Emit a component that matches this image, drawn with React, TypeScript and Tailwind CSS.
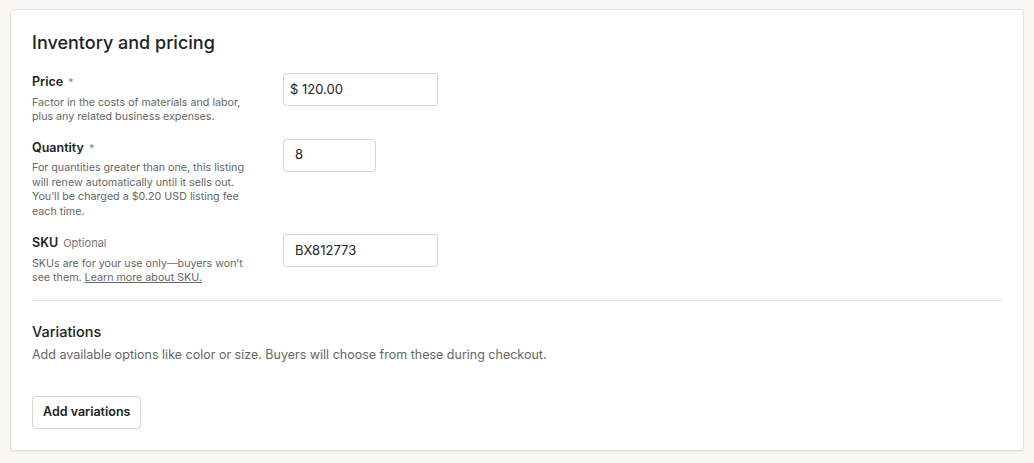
import React from 'react'

const font = { fontFamily: 'Inter, "Liberation Sans", Arial, sans-serif' }

function Field({
  label,
  required,
  optional,
  children,
  input,
}: {
  label: string
  required?: boolean
  optional?: boolean
  children: React.ReactNode
  input: React.ReactNode
}) {
  return (
    <div className="flex items-start">
      <div className="w-[251px] shrink-0">
        <div className="flex items-baseline gap-[5px]">
          <span className="text-[12.5px] font-semibold leading-[16px] text-[#222]">{label}</span>
          {required && <span className="text-[11px] text-[#888]">*</span>}
          {optional && <span className="text-[11px] text-[#777]">Optional</span>}
        </div>
        <p className="mt-[5px] text-[10.7px] leading-[14.5px] text-[#666]">{children}</p>
      </div>
      {input}
    </div>
  )
}

export default function App() {
  return (
    <div className="min-h-[463px] bg-[#f8f7f3] px-[10px] pt-[9px] pb-[12px]" style={font}>
      <section className="rounded-[3px] border border-[#e2e1dc] bg-white px-[21px] pt-[22px] pb-[21px] shadow-[0_1px_1px_rgba(0,0,0,0.06)]">
        <h2 className="text-[18px] font-medium leading-[22px] text-[#222]">Inventory and pricing</h2>

        <div className="mt-[20px] flex flex-col">
          <Field
            label="Price"
            required
            input={
              <div className="-mt-[1px] flex h-[33px] w-[155px] items-center rounded-[3px] border border-[#d6d6d6] px-[6px] text-[13px] text-[#222]">
                $ 120.00
              </div>
            }
          >
            Factor in the costs of materials and labor,
            <br />
            plus any related business expenses.
          </Field>

          <div className="mt-[15px]">
            <Field
              label="Quantity"
              required
              input={
                <div className="-mt-[1px] flex h-[33px] w-[93px] items-center rounded-[3px] border border-[#d6d6d6] px-[11px] text-[13px] text-[#222]">
                  8
                </div>
              }
            >
              For quantities greater than one, this listing
              <br />
              will renew automatically until it sells out.
              <br />
              You’ll be charged a $0.20 USD listing fee
              <br />
              each time.
            </Field>
          </div>

          <div className="mt-[16px]">
            <Field
              label="SKU"
              optional
              input={
                <div className="-mt-[1px] flex h-[33px] w-[155px] items-center rounded-[3px] border border-[#d6d6d6] px-[11px] text-[13px] text-[#222]">
                  BX812773
                </div>
              }
            >
              SKUs are for your use only—buyers won’t
              <br />
              see them. <span className="underline">Learn more about SKU.</span>
            </Field>
          </div>
        </div>

        <div className="mt-[14px] h-px bg-[#e6e5e1]" />

        <h3 className="mt-[22px] text-[14.5px] font-medium leading-[18px] text-[#222]">Variations</h3>
        <p className="mt-[6px] text-[12.5px] leading-[16px] text-[#666]">
          Add available options like color or size. Buyers will choose from these during checkout.
        </p>

        <button className="mt-[33px] h-[33px] rounded-[3px] border border-[#d6d6d6] bg-white px-[10px] text-[12.5px] font-semibold text-[#222]">
          Add variations
        </button>
      </section>
    </div>
  )
}
